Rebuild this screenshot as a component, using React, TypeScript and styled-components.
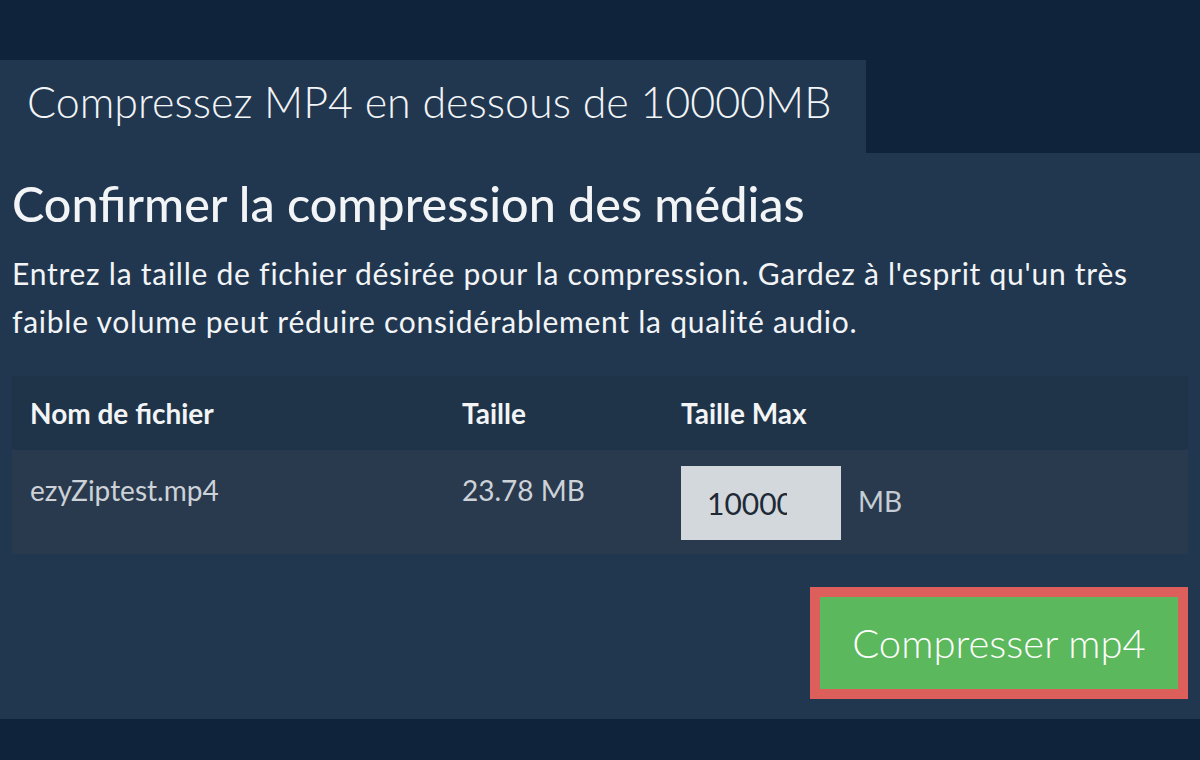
import React, { useState } from "react";
import styled, { createGlobalStyle } from "styled-components";

const GlobalStyle = createGlobalStyle`
  html, body {
    margin: 0;
    padding: 0;
    background: #0f233a;
    font-family: Lato, "Open Sans", sans-serif;
  }
`;

const Page = styled.div`
  width: 1200px;
  height: 760px;
  padding-top: 60px;
  box-sizing: border-box;
  background: #0f233a;
`;

const Tab = styled.div`
  width: 866px;
  height: 93px;
  box-sizing: border-box;
  padding: 0 0 10px 27px;
  display: flex;
  align-items: center;
  background: #213750;
  color: #f2f4f6;
  font-size: 43px;
  font-weight: 300;
`;

const Panel = styled.div`
  background: #213750;
  padding: 0 12px 20px;
  height: 566px;
  box-sizing: border-box;
  display: flex;
  flex-direction: column;
`;

const Heading = styled.h1`
  margin: 21px 0 0;
  font-size: 48.5px;
  font-weight: 500;
  line-height: 58px;
  color: #f2f4f6;
`;

const Intro = styled.p`
  margin: 17px 0 0;
  font-size: 30px;
  letter-spacing: 0.75px;
  line-height: 48px;
  color: #f2f4f6;
`;

const Table = styled.div`
  margin-top: 31px;
  display: grid;
  grid-template-columns: 432px 219px 1fr;
`;

const HeadCell = styled.div`
  background: #1f3449;
  height: 74px;
  padding: 0 18px;
  display: flex;
  align-items: center;
  font-size: 28px;
  font-weight: 700;
  color: #f2f4f6;
`;

const Cell = styled.div`
  background: #2a3a4e;
  height: 104px;
  box-sizing: border-box;
  padding: 23px 18px 0;
  font-size: 28px;
  color: #cdd2d8;
`;

const InputCell = styled(Cell)`
  padding: 16px 18px 0;
  display: flex;
  align-items: flex-start;
  gap: 17px;
`;

const SizeInput = styled.input`
  width: 160px;
  height: 74px;
  box-sizing: border-box;
  border: none;
  border-radius: 0;
  outline: none;
  background: #d3d8dd;
  padding: 0 54px 0 26px;
  font-family: Lato, sans-serif;
  font-size: 30px;
  color: #1e2a36;
`;

const Unit = styled.span`
  align-self: center;
  margin-top: -18px;
  font-size: 28px;
  color: #c5ccd4;
`;

const Actions = styled.div`
  margin-top: auto;
  display: flex;
  justify-content: flex-end;
`;

const CompressButton = styled.button`
  width: 378px;
  height: 112px;
  box-sizing: border-box;
  border: 10px solid #dc5f5c;
  border-radius: 0;
  background: #5cb85c;
  color: #ffffff;
  font-family: Lato, sans-serif;
  font-size: 40px;
  font-weight: 300;
  cursor: pointer;
`;

export default function App() {
  const [maxSize, setMaxSize] = useState("10000");

  return (
    <>
      <GlobalStyle />
      <Page>
        <Tab>Compressez MP4 en dessous de 10000MB</Tab>
        <Panel>
          <Heading>Confirmer la compression des médias</Heading>
          <Intro>
            Entrez la taille de fichier désirée pour la compression. Gardez à l'esprit qu'un très
            faible volume peut réduire considérablement la qualité audio.
          </Intro>
          <Table>
            <HeadCell>Nom de fichier</HeadCell>
            <HeadCell>Taille</HeadCell>
            <HeadCell>Taille Max</HeadCell>
            <Cell>ezyZiptest.mp4</Cell>
            <Cell>23.78 MB</Cell>
            <InputCell>
              <SizeInput value={maxSize} onChange={(e) => setMaxSize(e.target.value)} />
              <Unit>MB</Unit>
            </InputCell>
          </Table>
          <Actions>
            <CompressButton>Compresser mp4</CompressButton>
          </Actions>
        </Panel>
      </Page>
    </>
  );
}
